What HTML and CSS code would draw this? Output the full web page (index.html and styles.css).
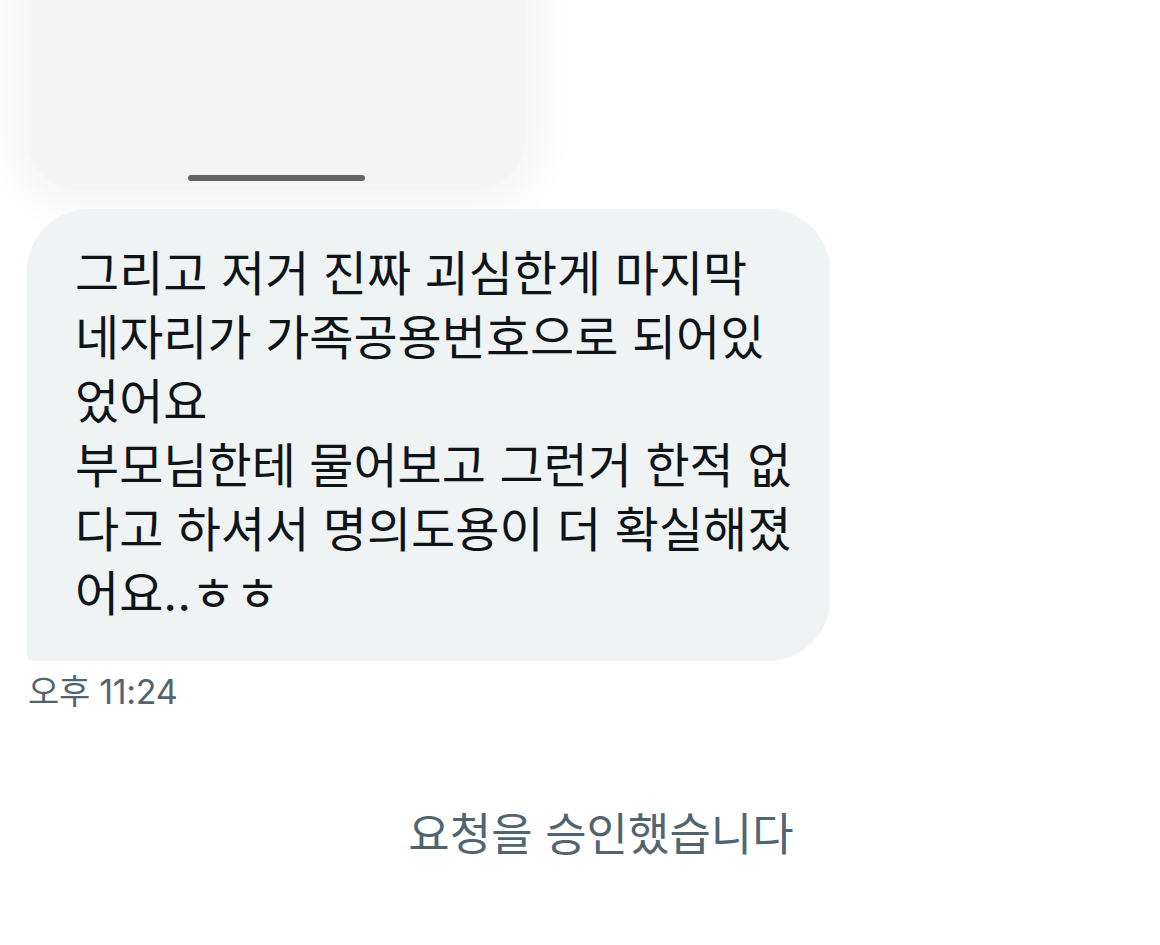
FILE: index.html
```html
<!DOCTYPE html>
<html lang="ko">
<head>
    <meta charset="UTF-8">
    <meta name="viewport" content="width=device-width, initial-scale=1.0">
    <title>메시지</title>
    <link rel="stylesheet" href="styles.css">
</head>
<body>
    <div class="thread">
        <div class="preview-card">
            <div class="grab-handle"></div>
        </div>

        <div class="message incoming">
            <div class="bubble">
                그리고 저거 진짜 괴심한게 마지막<br>
                네자리가 가족공용번호으로 되어있<br>
                었어요<br>
                부모님한테 물어보고 그런거 한적 없<br>
                다고 하셔서 명의도용이 더 확실해졌<br>
                어요..ㅎㅎ
            </div>
            <div class="timestamp">오후 11:24</div>
        </div>

        <div class="system-note">요청을 승인했습니다</div>
    </div>
</body>
</html>
```

FILE: styles.css
```css
body {
    margin: 0;
    background: #ffffff;
    font-family: Inter, "Noto Sans CJK KR", sans-serif;
    color: #0f1419;
    overflow: hidden;
}
.thread {
    padding: 0 28px;
}
.preview-card {
    width: 497px;
    height: 230px;
    margin-top: -40px;
    padding-bottom: 9px;
    box-sizing: border-box;
    background: #f4f4f4;
    border-radius: 0 0 52px 52px;
    box-shadow: 0 0 40px 18px rgba(0,0,0,0.045);
    display: flex;
    align-items: flex-end;
    justify-content: center;
}
.grab-handle {
    width: 177px;
    height: 6px;
    border-radius: 3px;
    background: #646464;
}
.message {
    margin-top: 19px;
}
.bubble {
    width: 803px;
    box-sizing: border-box;
    margin-left: -1px;
    padding: 33px 40px 35px 48px;
    background: #eff3f4;
    border-radius: 62px 62px 62px 6px;
    font-size: 48px;
    line-height: 64px;
    white-space: nowrap;
}
.timestamp {
    margin-top: 11px;
    font-size: 34px;
    line-height: 40px;
    color: #536471;
    letter-spacing: -0.3px;
}
.system-note {
    margin-top: 95px;
    text-align: center;
    font-size: 45px;
    line-height: 56px;
    color: #536471;
    padding-left: 42px;
}
```
